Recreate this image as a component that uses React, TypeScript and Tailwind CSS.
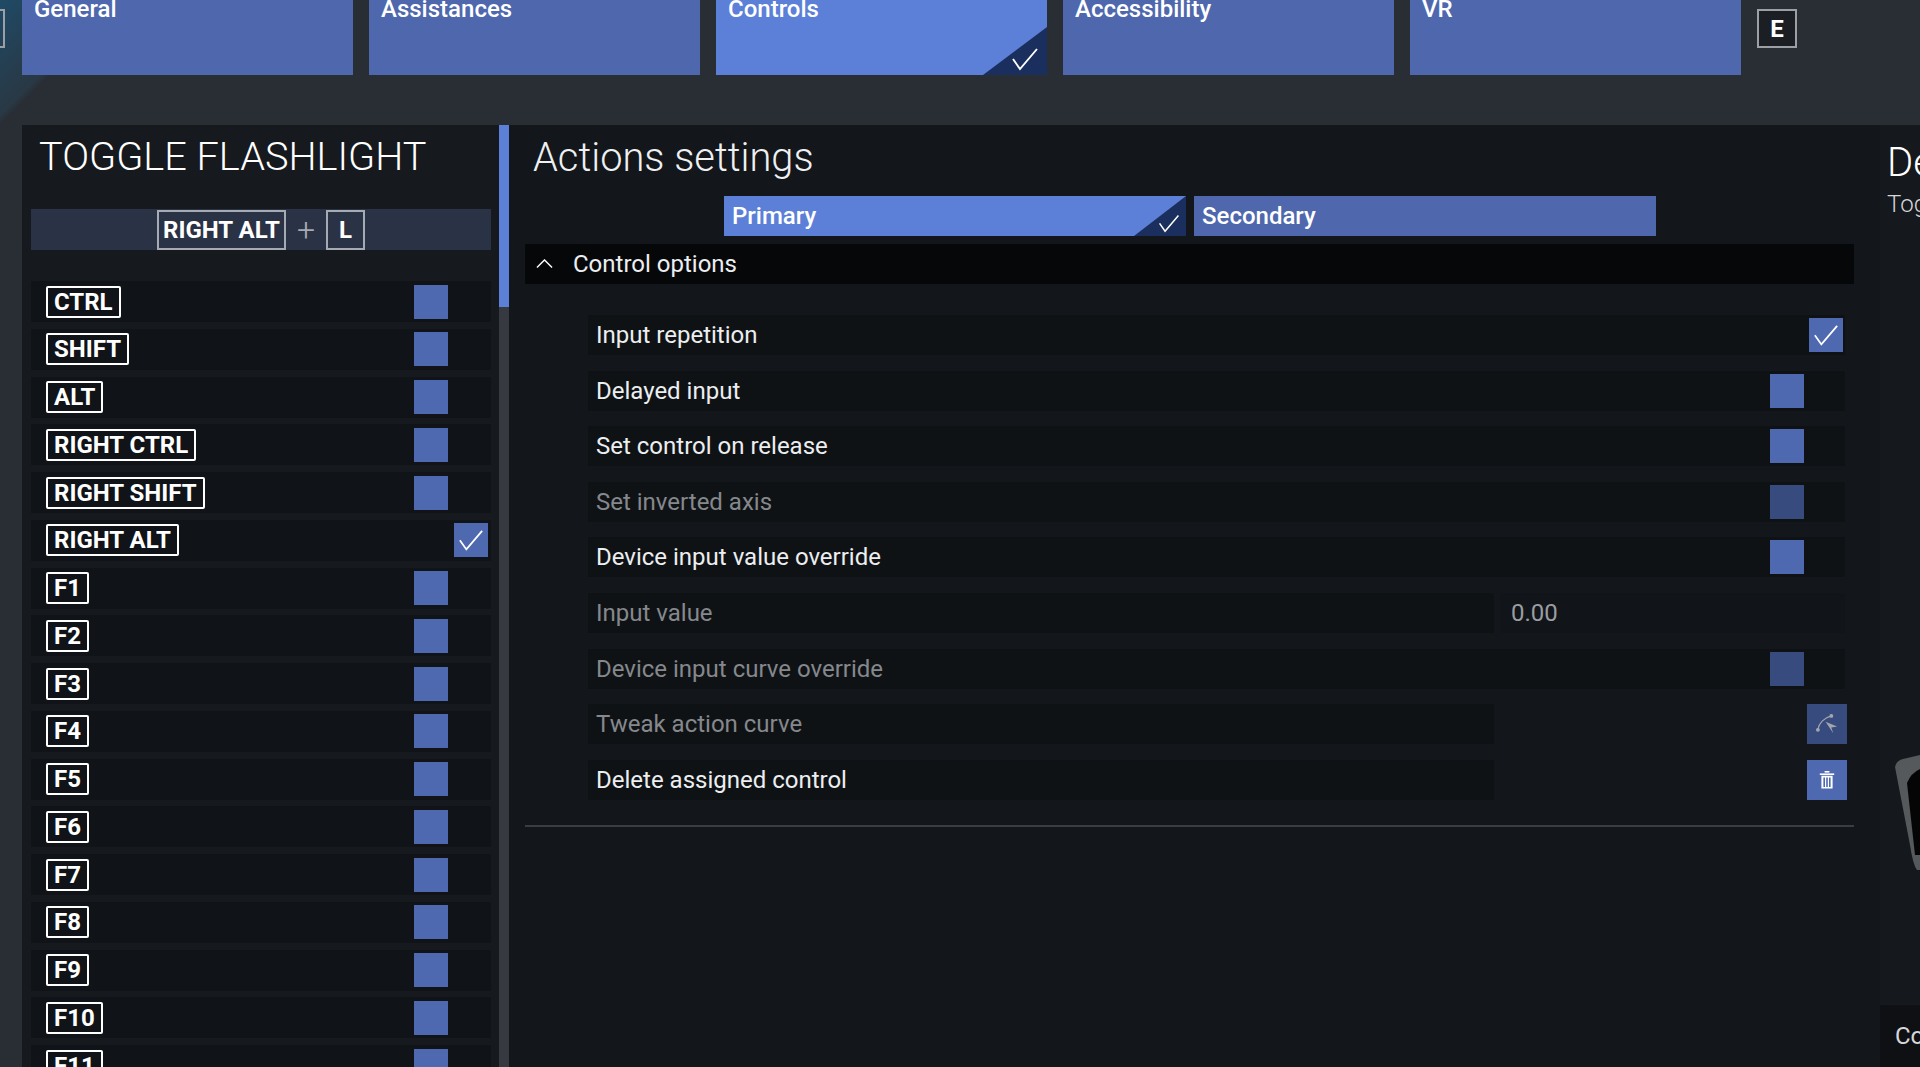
const keys = ['CTRL', 'SHIFT', 'ALT', 'RIGHT CTRL', 'RIGHT SHIFT', 'RIGHT ALT', 'F1', 'F2', 'F3', 'F4', 'F5', 'F6', 'F7', 'F8', 'F9', 'F10', 'F11'];
const tabs = ['General', 'Assistances', 'Controls', 'Accessibility', 'VR'];

const options = [
  { label: 'Input repetition', kind: 'checked' },
  { label: 'Delayed input', kind: 'box' },
  { label: 'Set control on release', kind: 'box' },
  { label: 'Set inverted axis', kind: 'box', disabled: true },
  { label: 'Device input value override', kind: 'box' },
  { label: 'Input value', kind: 'value', disabled: true },
  { label: 'Device input curve override', kind: 'box', disabled: true },
  { label: 'Tweak action curve', kind: 'curve', disabled: true },
  { label: 'Delete assigned control', kind: 'trash' },
];

function Check({ className }: { className: string }) {
  return (
    <svg viewBox="0 0 28 24" fill="none" stroke="white" strokeWidth="1.9" className={className}>
      <polyline points="2,12 9,22 26,2" />
    </svg>
  );
}

function Corner({ w, h }: { w: number; h: number }) {
  return (
    <svg width={w} height={h} viewBox={`0 0 ${w} ${h}`} className="absolute right-0 bottom-0">
      <polygon points={`0,${h} ${w},0 ${w},${h}`} fill="#1b2f5e" />
    </svg>
  );
}

function KeyCap({ name }: { name: string }) {
  return (
    <span className="flex h-[32px] items-center rounded-[2px] border-2 border-white px-[6px] text-[24px] leading-none font-bold text-white">
      {name}
    </span>
  );
}

function OptionRow({ label, kind, disabled }: { label: string; kind: string; disabled?: boolean }) {
  const box = disabled ? 'bg-[#384b7e]' : 'bg-[#4f69b0]';
  const textColor = disabled ? 'text-[#85888c]' : 'text-[#eceef0]';
  const wide = kind === 'value' || kind === 'curve' || kind === 'trash';
  return (
    <div className="flex h-[40px] items-center">
      <div className={`flex h-full items-center bg-[#0f1215] pl-[8px] text-[24px] ${textColor} ${wide ? 'w-[906px]' : 'w-[1257px]'}`}>
        {label}
        {kind === 'box' && <span className={`ml-auto mr-[41px] h-[34px] w-[34px] ${box}`} />}
        {kind === 'checked' && (
          <span className={`ml-auto mr-[2px] flex h-[34px] w-[34px] items-center justify-center ${box}`}>
            <Check className="w-[26px]" />
          </span>
        )}
      </div>
      {kind === 'value' && (
        <span className="ml-[6px] flex h-full flex-1 items-center bg-[#111418] pl-[11px] text-[24px] text-[#9a9da1]">0.00</span>
      )}
      {kind === 'curve' && (
        <span className="ml-auto mr-[-2px] flex h-[40px] w-[40px] items-center justify-center bg-[#384b7e]">
          <svg viewBox="0 0 24 22" className="w-[23px]" fill="none" stroke="#a2a6ad" strokeWidth="1.2">
            <path d="M2 16 C3 10 8 4 16 2" />
            <circle cx="2" cy="16.5" r="1.4" fill="#a2a6ad" />
            <circle cx="16" cy="2" r="1.4" fill="#a2a6ad" />
            <polygon points="10,8 22,13 16,14 18,20" fill="#a2a6ad" stroke="none" />
          </svg>
        </span>
      )}
      {kind === 'trash' && (
        <span className="ml-auto mr-[-2px] flex h-[40px] w-[40px] items-center justify-center bg-[#4f69b0]">
          <svg viewBox="0 0 20 22" className="w-[16px]" fill="white">
            <rect x="7" y="0" width="6" height="2" />
            <rect x="1" y="3" width="18" height="2" />
            <path d="M3 6h14v16H3z M5.5 8v12h2V8z M9 8v12h2V8z M12.5 8v12h2V8z" fillRule="evenodd" />
          </svg>
        </span>
      )}
    </div>
  );
}

export default function App() {
  return (
    <div className="relative h-[1067px] w-[1920px] overflow-hidden bg-[#292e35] bg-[linear-gradient(135deg,#1f4a66_0px,#293844_82px,#292e35_88px)] font-['Roboto',sans-serif]">
      <div className="flex h-[75px]">
        <div className="mt-[9px] mr-[17px] h-[39px] w-[5px] border-y-2 border-r-2 border-[#9ca0a6]" />
        <div className="flex gap-[16px]">
          {tabs.map((t) => (
            <div
              key={t}
              className={`relative h-[75px] w-[331px] pl-[12px] text-[24px] leading-[18px] font-medium text-white ${t === 'Controls' ? 'bg-[#5c7fd8]' : 'bg-[#4e67ad]'}`}
            >
              {t}
              {t === 'Controls' && (
                <>
                  <Corner w={64} h={48} />
                  <Check className="absolute right-[8px] bottom-[4px] w-[28px]" />
                </>
              )}
            </div>
          ))}
        </div>
        <span className="mt-[9px] ml-[16px] flex h-[39px] w-[40px] items-center justify-center border-2 border-[#9ca0a6] bg-[#1b1e23] text-[24px] font-bold text-white">
          E
        </span>
      </div>

      <div className="mt-[50px] flex h-[942px] pl-[22px]">
        <div className="w-[477px] shrink-0 overflow-hidden bg-[#16191d] pr-[8px] pl-[9px]">
          <h1 className="mt-[8px] ml-[8px] text-[39.7px] leading-[47px] font-light text-white">TOGGLE FLASHLIGHT</h1>
          <div className="mt-[29px] flex h-[41px] items-center justify-center gap-[11px] bg-[#2a3245]">
            <span className="flex h-[40px] w-[129px] items-center justify-center border-2 border-[#a6aab2] text-[24px] font-bold text-white">RIGHT ALT</span>
            <span className="text-[32px] leading-none font-light text-[#a6aab2]">+</span>
            <span className="flex h-[40px] w-[39px] items-center justify-center border-2 border-[#a6aab2] text-[24px] font-bold text-white">L</span>
          </div>
          <div className="mt-[31px] flex flex-col gap-[6.75px]">
            {keys.map((k) => (
              <div key={k} className="flex h-[41px] items-center bg-[#101317] pl-[15px]">
                <KeyCap name={k} />
                {k === 'RIGHT ALT' ? (
                  <span className="ml-auto mr-[3px] flex h-[34px] w-[34px] items-center justify-center bg-[#4f69b0]">
                    <Check className="w-[26px]" />
                  </span>
                ) : (
                  <span className="ml-auto mr-[43px] h-[34px] w-[34px] bg-[#4f69b0]" />
                )}
              </div>
            ))}
          </div>
        </div>

        <div className="w-[10px] shrink-0 bg-[#36393f]">
          <div className="h-[182px] bg-[#5c7fd8]" />
        </div>

        <div className="w-[1371px] shrink-0 bg-[#13161a] pl-[16px]">
          <h2 className="mt-[9px] ml-[8px] text-[39.8px] leading-[47px] font-light text-[#eef0f2]">Actions settings</h2>
          <div className="mt-[15px] ml-[199px] flex gap-[8px]">
            <div className="relative flex h-[40px] w-[462px] items-center bg-[#5c7fd8] pl-[8px] text-[24px] font-medium text-white">
              Primary
              <Corner w={52} h={40} />
              <Check className="absolute right-[6px] bottom-[3px] w-[22px]" />
            </div>
            <div className="flex h-[40px] w-[462px] items-center bg-[#4e67ad] pl-[8px] text-[24px] font-medium text-white">Secondary</div>
          </div>
          <div className="mt-[8px] flex h-[40px] w-[1329px] items-center bg-[#060709] text-[24px] text-[#eceef0]">
            <svg viewBox="0 0 18 10" fill="none" stroke="white" strokeWidth="1.5" className="ml-[11px] w-[17px]">
              <polyline points="1,9 9,1 17,9" />
            </svg>
            <span className="ml-[20px]">Control options</span>
          </div>
          <div className="mt-[31px] ml-[63px] flex w-[1257px] flex-col gap-[15.6px]">
            {options.map((o) => (
              <OptionRow key={o.label} {...o} />
            ))}
          </div>
          <div className="mt-[25px] h-[2px] w-[1329px] bg-[#3a3d42]" />
        </div>

        <div className="relative w-[40px] shrink-0 bg-[#15181c] pl-[7px] text-white">
          <div className="mt-[14px] text-[40px] leading-[47px] font-light">De</div>
          <div className="text-[24px] font-light text-[#d5d7da]">Tog</div>
          <svg viewBox="0 0 25 115" className="absolute top-[630px] left-[15px] w-[25px]">
            <path d="M0 12 Q1 6 8 4 L25 0 V115 H22 Q18 110 15 90 Z" fill="#55595c" />
            <path d="M12 28 Q16 18 25 14 V100 H20 Z" fill="#050505" />
          </svg>
          <div className="absolute bottom-0 left-0 flex h-[62px] w-full items-center bg-[#0e1013] pl-[15px] text-[24px] text-[#d5d7da]">Co</div>
        </div>
      </div>
    </div>
  );
}
